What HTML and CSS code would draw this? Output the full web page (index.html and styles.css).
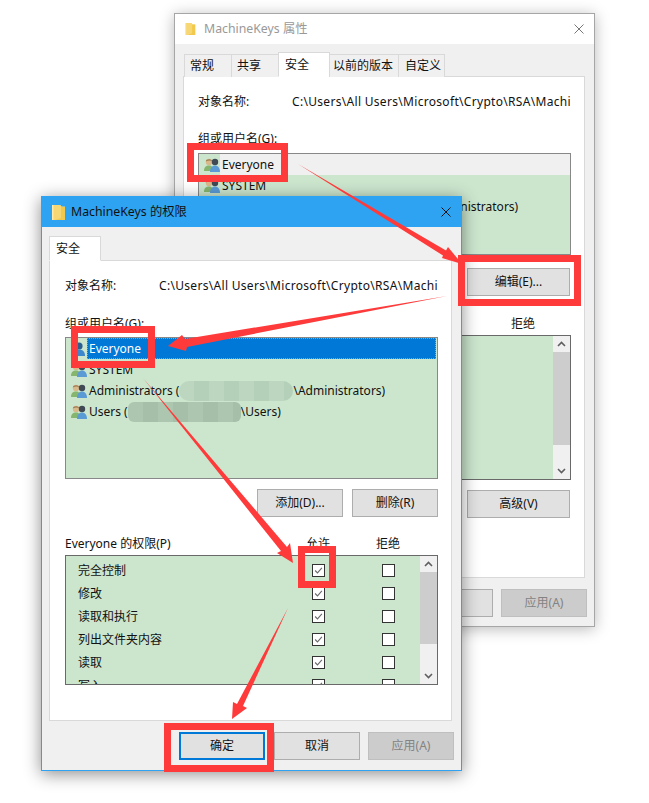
FILE: index.html
```html
<!DOCTYPE html>
<html lang="zh-CN">
<head>
<meta charset="utf-8">
<title>MachineKeys 的权限</title>
<link rel="stylesheet" href="styles.css">
</head>
<body>
<svg class="defs" width="0" height="0" aria-hidden="true">
  <symbol id="users" viewBox="0 0 16 16">
    <circle cx="5" cy="5" r="3.2" fill="#d9b98a"/>
    <path d="M1.8 4.6C2 1.6 8 1.4 8.2 4.4 6.5 3.2 4 3.4 1.8 4.6z" fill="#9a7a50"/>
    <path d="M0 14c0-4 2-5.5 5-5.5S9 10 9 14z" fill="#86b56e"/>
    <circle cx="11" cy="5" r="3.2" fill="#3f4a55"/>
    <path d="M6 15c0-4 2-6.5 5-6.5s5 2.500 5 6.500z" fill="#5a9bd6"/>
  </symbol>
  <symbol id="user-sel" viewBox="0 0 16 16">
    <circle cx="8" cy="5" r="3.600" fill="#2a5f8f"/>
    <path d="M2 15c0-4 2-6.500 6-6.500s6 2.500 6 6.500z" fill="#3d88cc"/>
  </symbol>
  <symbol id="folder" viewBox="0 0 14 17">
    <path d="M0 1h8.500l1 1.500H13V16H0z" fill="#f7d774"/>
    <path d="M9 3h4v13H3.500l5.500-2z" fill="#f2c94c"/>
    <path d="M0 1h1.500v15H0z" fill="#ffe9a8"/>
  </symbol>
  <symbol id="close" viewBox="0 0 10 10">
    <path d="M.5.5l9 9M9.500.5l-9 9" stroke="currentColor" stroke-width="1" fill="none"/>
  </symbol>
  <symbol id="up" viewBox="0 0 9 6"><path d="M1 5l3.500-3.500L8 5" stroke="#5f5f5f" stroke-width="1.600" fill="none"/></symbol>
  <symbol id="down" viewBox="0 0 9 6"><path d="M1 1l3.500 3.500L8 1" stroke="#5f5f5f" stroke-width="1.600" fill="none"/></symbol>
  <symbol id="tick" viewBox="0 0 13 13"><path d="M2.500 6.500l2.800 2.800 5.200-5.800" stroke="#6a6a6a" stroke-width="1.300" fill="none"/></symbol>
</svg>

<section class="win win-back">
  <header class="title title-back">
    <svg class="folder"><use href="#folder"/></svg>
    <span class="title-text">MachineKeys 属性</span>
    <svg class="close"><use href="#close"/></svg>
  </header>
  <nav class="tabs">
    <span class="tab w47">常规</span>
    <span class="tab w47">共享</span>
    <span class="tab tab-on w51">安全</span>
    <span class="tab w69">以前的版本</span>
    <span class="tab w46">自定义</span>
  </nav>
  <div class="panel panel-back">
    <div class="objrow"><span class="objlabel">对象名称:</span><span class="path">C:\Users\All Users\Microsoft\Crypto\RSA\Machi</span></div>
    <div class="grouplabel">组或用户名(G):</div>
    <div class="list list-back">
      <div class="row row-focus"><svg class="ico"><use href="#users"/></svg>Everyone</div>
      <div class="row"><svg class="ico"><use href="#users"/></svg>SYSTEM</div>
      <div class="row"><svg class="ico"><use href="#users"/></svg>Administrators (<span class="mask mask-c"></span>\Administrators)</div>
    </div>
    <div class="btnrow btnrow-edit"><button class="btn btn-wide">编辑(E)...</button></div>
    <div class="permhead-back"><span>拒绝</span></div>
    <div class="permbox permbox-back">
      <div class="fill"></div>
      <div class="scroll"><svg class="chev"><use href="#up"/></svg><div class="thumb thumb-back"></div><svg class="chev"><use href="#down"/></svg></div>
    </div>
    <div class="btnrow btnrow-adv"><button class="btn btn-wide">高级(V)</button></div>
  </div>
  <footer class="foot foot-back">
    <button class="btn">取消</button>
    <button class="btn btn-off">应用(A)</button>
  </footer>
</section>

<section class="win win-front">
  <header class="title title-front">
    <svg class="folder"><use href="#folder"/></svg>
    <span class="title-text">MachineKeys 的权限</span>
    <svg class="close"><use href="#close"/></svg>
  </header>
  <nav class="tabs tabs-front">
    <span class="tab tab-on w51">安全</span>
  </nav>
  <div class="panel panel-front">
    <div class="objrow"><span class="objlabel objlabel-front">对象名称:</span><span class="path">C:\Users\All Users\Microsoft\Crypto\RSA\Machi</span></div>
    <div class="grouplabel grouplabel-front">组或用户名(G):</div>
    <div class="list list-front">
      <div class="row row-sel"><svg class="ico"><use href="#user-sel"/></svg><span class="sel">Everyone</span></div>
      <div class="row"><svg class="ico"><use href="#users"/></svg>SYSTEM</div>
      <div class="row"><svg class="ico"><use href="#users"/></svg>Administrators (<span class="mask mask-a"></span>\Administrators)</div>
      <div class="row"><svg class="ico"><use href="#users"/></svg>Users (<span class="mask mask-b"></span>\Users)</div>
    </div>
    <div class="btnrow btnrow-add">
      <button class="btn">添加(D)...</button>
      <button class="btn">删除(R)</button>
    </div>
    <div class="permhead"><span class="permname">Everyone 的权限(P)</span><span class="col">允许</span><span class="col">拒绝</span></div>
    <div class="permbox permbox-front">
      <div class="permrows">
        <div class="perm"><span class="permname">完全控制</span><span class="col"><svg class="cb"><use href="#tick"/></svg></span><span class="col"><i class="cb"></i></span></div>
        <div class="perm"><span class="permname">修改</span><span class="col"><svg class="cb"><use href="#tick"/></svg></span><span class="col"><i class="cb"></i></span></div>
        <div class="perm"><span class="permname">读取和执行</span><span class="col"><svg class="cb"><use href="#tick"/></svg></span><span class="col"><i class="cb"></i></span></div>
        <div class="perm"><span class="permname">列出文件夹内容</span><span class="col"><svg class="cb"><use href="#tick"/></svg></span><span class="col"><i class="cb"></i></span></div>
        <div class="perm"><span class="permname">读取</span><span class="col"><svg class="cb"><use href="#tick"/></svg></span><span class="col"><i class="cb"></i></span></div>
        <div class="perm"><span class="permname">写入</span><span class="col"><svg class="cb"><use href="#tick"/></svg></span><span class="col"><i class="cb"></i></span></div>
      </div>
      <div class="scroll"><svg class="chev"><use href="#up"/></svg><div class="thumb thumb-front"></div><svg class="chev"><use href="#down"/></svg></div>
    </div>
  </div>
  <footer class="foot foot-front">
    <button class="btn btn-default">确定</button>
    <button class="btn">取消</button>
    <button class="btn btn-off">应用(A)</button>
  </footer>
</section>

<div class="mark mark-1"></div>
<div class="mark mark-2"></div>
<div class="mark mark-3"></div>
<div class="mark mark-4"></div>
<div class="mark mark-5"></div>

<svg class="arrows" viewBox="0 0 649 803" aria-hidden="true">
  <polygon points="298,164 446,250.500 448,247 462,264 442,258 443,255.500"/>
  <polygon points="447,296 185,339 182,335 168,346 186,351 187,347"/>
  <polygon points="143,378 287,547 290,543 293,563 277,553 281,551"/>
  <polygon points="288,608 243,706 247,708 232,719 233,702 237,704"/>
</svg>
</body>
</html>
```
FILE: styles.css
```css
* { box-sizing: border-box; }
html, body { margin: 0; padding: 0; }
body {
  position: relative;
  width: 649px;
  height: 803px;
  overflow: hidden;
  background: #fff;
  color: #111;
  font: 12px/16px "Noto Sans", "Noto Sans CJK SC", sans-serif;
}
.defs { position: absolute; }

.win {
  position: absolute;
  width: 421px;
  display: flex;
  flex-direction: column;
  background: #f0f0f0;
}
.win-back {
  left: 174px;
  top: 13px;
  height: 614px;
  border: 1px solid #a6a6a6;
  box-shadow: 0 2px 14px rgba(0, 0, 0, .28);
}
.win-front {
  left: 41px;
  top: 196px;
  height: 575px;
  border: 1px solid #2ea3f2;
  box-shadow: 0 3px 16px rgba(0, 0, 0, .45);
}

.title { display: flex; align-items: center; flex: none; }
.title-back { height: 30px; padding: 0 10px; background: #fff; color: #999; }
.title-front { height: 30px; padding: 0 10px; background: #2ea3f2; color: #111; }
.folder { width: 14px; height: 17px; flex: none; }
.title-back .folder { width: 11px; height: 14px; margin-right: 3px; }
.title-text { margin-left: 5px; flex: 1; font-size: 12.3px; }
.close { width: 10px; height: 10px; flex: none; }
.title-back .close { color: #777; }

.tabs { display: flex; align-items: flex-end; height: 33px; padding-left: 9px; flex: none; margin-bottom: -1px; position: relative; z-index: 1; }
.tabs-front { height: 34px; padding-left: 7px; }
.tab {
  height: 23px;
  display: flex;
  align-items: center;
  padding-left: 5px;
  background: #f0f0f0;
  border: 1px solid #d9d9d9;
  border-bottom: 0;
  margin-left: -1px;
}
.tab:first-child { margin-left: 0; }
.tab-on { height: 25px; padding-left: 6px; background: #fff; border-bottom: 1px solid #fff; }
.w46 { width: 47px; padding-left: 6px; }
.w47 { width: 48px; }
.w51 { width: 52px; }
.w69 { width: 70px; padding-left: 3px; }

.panel { background: #fff; border: 1px solid #d9d9d9; flex: none; }
.panel-back { width: 402px; height: 502px; margin-left: 8px; padding: 0 14px; }
.panel-front { width: 403px; height: 461px; margin-left: 7px; padding: 0 14px 0 15px; }

.objrow { display: flex; height: 16px; margin-top: 17px; white-space: nowrap; }
.objlabel { width: 94px; flex: none; }
.path { flex: 1; overflow: hidden; letter-spacing: .31px; }
.grouplabel { margin-top: 21px; height: 16px; }
.grouplabel-front { margin-top: 22px; }

.list {
  margin-top: 6px;
  width: 373px;
  border: 1px solid #888;
  background: #cce6ce;
  overflow: hidden;
}
.list-back { height: 102px; }
.list-front { height: 142px; margin-top: 5px; }
.row { display: flex; align-items: center; height: 21px; padding-left: 5px; white-space: pre; }
.row-focus { background: linear-gradient(to right, #cce6ce 21px, #f0f0f0 21px); }
.ico { width: 16px; height: 16px; flex: none; margin-right: 2px; }
.row-sel { color: #fff; }
.sel {
  flex: 1;
  height: 21px;
  line-height: 19px;
  margin: 0 1px 0 -2px;
  padding-left: 1px;
  background: #0078d7;
  border: 1px dotted #e8913a;
}
.mask {
  display: inline-block;
  height: 20px;
  filter: blur(.6px);
}
.mask-a {
  width: 114px;
  border-radius: 10px;
  background: repeating-linear-gradient(to right, #bcd6c0 0 15px, #b4d0b8 15px 30px);
}
.mask-b {
  width: 113px;
  border-radius: 6px;
  background: repeating-linear-gradient(to right, #adc6b0 0 15px, #a5bfa8 15px 30px);
}
.mask-c { width: 114px; background: #c4dec7; }

.btnrow { display: flex; justify-content: flex-end; gap: 9px; width: 373px; }
.btnrow-edit { margin-top: 13px; padding-right: 1px; }
.btnrow-adv { margin-top: 10px; padding-right: 1px; }
.btnrow-add { margin-top: 10px; }
.btn {
  width: 86px;
  height: 28px;
  padding: 0;
  background: #e1e1e1;
  border: 1px solid #adadad;
  color: #111;
  font: inherit;
}
.btn-wide { width: 103px; }
.btn-off { background: #cccccc; border-color: #bfbfbf; color: #838383; }
.btn-default { border: 2px solid #0078d7; margin-right: 1px; }

.permhead-back { display: flex; justify-content: flex-end; width: 373px; padding-right: 36px; margin-top: 20px; height: 16px; }
.permbox { display: flex; border: 1px solid #696969; width: 373px; overflow: hidden; background: #cce6ce; }
.permbox-back { height: 145px; margin-top: 3px; }
.fill { flex: 1; }
.permbox-front { height: 130px; margin-top: 3px; }
.permhead { display: flex; width: 373px; margin-top: 19px; height: 16px; align-items: center; }
.permname { flex: 1; }
.perm .permname { margin-left: 12px; }
.col { width: 70px; flex: none; display: flex; justify-content: center; }
.permhead .col:last-child { margin-right: 15px; }
.perm .col:last-child { margin-right: -3px; }
.permrows { flex: 1; padding-top: 3px; }
.perm { display: flex; align-items: center; height: 23px; }
.cb { display: block; width: 13px; height: 13px; background: #fff; border: 1px solid #333; }

.scroll {
  width: 17px;
  flex: none;
  display: flex;
  flex-direction: column;
  align-items: center;
  background: #f0f0f0;
  padding: 5px 0;
}
.chev { width: 9px; height: 6px; flex: none; }
.thumb { width: 100%; background: #cdcdcd; flex: none; margin-top: 5px; }
.thumb-back { height: 93px; }
.thumb-front { height: 72px; }
.scroll .chev:last-child { margin-top: auto; }

.foot { display: flex; gap: 8px; justify-content: flex-end; flex: none; width: 412px; margin-top: 11px; }

.mark { position: absolute; border: 7px solid #ff3a3a; }
.mark-1 { left: 187px; top: 143px; width: 101px; height: 39px; }
.mark-2 { left: 458px; top: 255px; width: 123px; height: 51px; }
.mark-3 { left: 71px; top: 326px; width: 84px; height: 42px; }
.mark-4 { left: 298px; top: 546px; width: 38px; height: 42px; }
.mark-5 { left: 164px; top: 723px; width: 110px; height: 49px; }

.arrows { position: absolute; left: 0; top: 0; width: 649px; height: 803px; fill: #ff3a3a; }
```
